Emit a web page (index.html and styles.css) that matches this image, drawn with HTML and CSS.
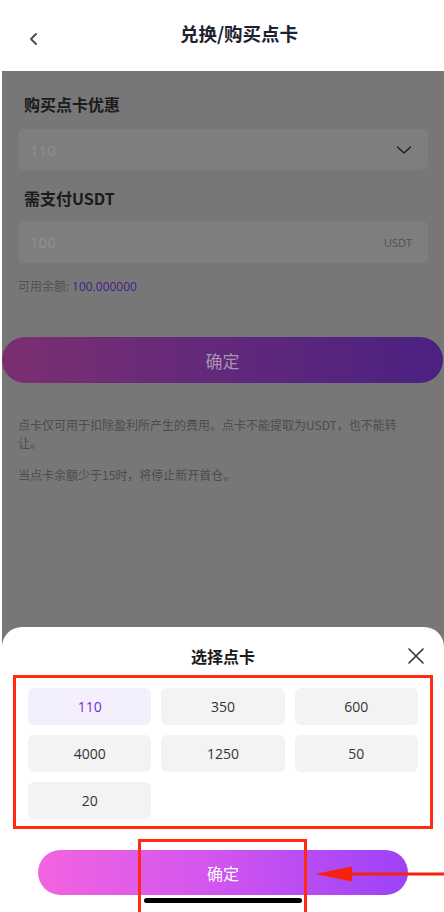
FILE: index.html
```html
<!DOCTYPE html>
<html lang="zh-CN">
<head>
    <meta charset="UTF-8">
    <meta name="viewport" content="width=device-width, initial-scale=1.0">
    <title>兑换/购买点卡</title>
    <link rel="stylesheet" href="styles.css">
</head>
<body>
    <header class="topbar">
        <svg class="back" width="12" height="14" viewBox="0 0 12 14">
            <path d="M8 2 L3 7 L8 12" fill="none" stroke="#4b515c" stroke-width="2" stroke-linecap="round" stroke-linejoin="round"/>
        </svg>
        <h1>兑换/购买点卡</h1>
    </header>

    <main class="mask">
        <div class="label">购买点卡优惠</div>
        <div class="field">
            <span class="field-value">110</span>
            <svg width="16" height="10" viewBox="0 0 16 10">
                <path d="M1.5 2 L8 8 L14.5 2" fill="none" stroke="#222" stroke-width="1.6" stroke-linecap="round" stroke-linejoin="round"/>
            </svg>
        </div>
        <div class="label label-second">需支付USDT</div>
        <div class="field">
            <span class="field-value">100</span>
            <span class="field-unit">USDT</span>
        </div>
        <div class="balance">可用余额: <span class="balance-num">100.000000</span></div>
        <div class="confirm-dim">确定</div>
        <p class="note">点卡仅可用于扣除盈利所产生的费用。点卡不能提取为USDT，也不能转让。</p>
        <p class="note">当点卡余额少于15时，将停止新开首仓。</p>
    </main>

    <section class="sheet">
        <div class="sheet-head">
            <h2>选择点卡</h2>
            <svg class="close" width="18" height="18" viewBox="0 0 18 18">
                <path d="M2 2 L16 16 M16 2 L2 16" stroke="#333" stroke-width="1.6" stroke-linecap="round"/>
            </svg>
        </div>
        <div class="pick-box">
            <div class="pick-grid">
                <div class="pick active">110</div>
                <div class="pick">350</div>
                <div class="pick">600</div>
                <div class="pick">4000</div>
                <div class="pick">1250</div>
                <div class="pick">50</div>
                <div class="pick">20</div>
            </div>
        </div>
        <div class="confirm">确定</div>
    </section>

    <div class="mark-btn"></div>
    <div class="home-bar"></div>
    <svg class="arrow" width="132" height="20" viewBox="0 0 132 20">
        <path d="M37 8.5 H132 V11.5 H37 Z" fill="#f4220f"/>
        <path d="M2 10 L39 2.5 L39 17.5 Z" fill="#f4220f"/>
    </svg>
</body>
</html>
```

FILE: styles.css
```css
body {
    margin: 0;
    padding: 0;
    height: 912px;
    overflow: hidden;
    position: relative;
    background-color: #fff;
    font-family: "Noto Sans CJK SC", "Noto Sans", sans-serif;
}
.topbar {
    height: 71px;
    display: flex;
    align-items: center;
    justify-content: center;
    position: relative;
    padding: 0 0 6px 34px;
    box-sizing: border-box;
}
.topbar h1 {
    margin: 0;
    font-size: 18.5px;
    font-weight: 700;
    color: #1d2130;
}
.back {
    position: absolute;
    left: 28px;
    top: 32px;
}
.mask {
    margin-left: 2px;
    height: 841px;
    background-color: #777;
    padding: 22px 16px 0;
    box-sizing: border-box;
}
.label {
    font-size: 16px;
    line-height: 22px;
    font-weight: 700;
    color: #1b1b1b;
    padding-left: 6px;
}
.label-second {
    margin-top: 17px;
}
.field {
    margin-top: 14px;
    height: 41px;
    border-radius: 6px;
    background-color: #7e7e7e;
    display: flex;
    align-items: center;
    justify-content: space-between;
    padding: 0 16px 0 12px;
}
.label-second + .field {
    margin-top: 12px;
    height: 42px;
}
.field-value {
    font-family: "Open Sans", sans-serif;
    font-size: 15px;
    color: #909090;
}
.field-unit {
    font-family: "Open Sans", sans-serif;
    font-size: 11px;
    color: #505050;
}
.balance {
    margin-top: 14px;
    font-size: 12px;
    line-height: 18px;
    color: #525252;
}
.balance-num {
    font-family: "Open Sans", sans-serif;
    color: #471c87;
}
.confirm-dim {
    margin: 41px -15px 0 -16px;
    height: 46px;
    border-radius: 23px;
    background: linear-gradient(90deg, #7b2f70, #64297a 45%, #4b2182);
    color: #a893b4;
    font-size: 17px;
    display: flex;
    align-items: center;
    justify-content: center;
}
.note {
    margin: 14px 0 0;
    font-size: 12px;
    line-height: 18px;
    color: #4c4c4c;
    padding-right: 14px;
}
.confirm-dim + .note {
    margin-top: 33px;
}
.sheet {
    position: absolute;
    left: 2px;
    right: 0;
    bottom: 0;
    height: 285px;
    background-color: #fff;
    border-radius: 20px 20px 0 0;
}
.sheet-head {
    padding-top: 18px;
    position: relative;
    text-align: center;
}
.sheet-head h2 {
    margin: 0;
    font-size: 16px;
    line-height: 22px;
    font-weight: 700;
    color: #1a1a1a;
}
.close {
    position: absolute;
    right: 19px;
    top: 20px;
}
.pick-box {
    margin: 8px 11px 0;
    border: 3px solid #ff2a10;
    padding: 10px 12px 7px;
}
.pick-grid {
    display: grid;
    grid-template-columns: repeat(3, 1fr);
    gap: 10px;
}
.pick {
    height: 37px;
    border-radius: 6px;
    background-color: #f3f3f3;
    display: flex;
    align-items: center;
    justify-content: center;
    font-family: "Open Sans", sans-serif;
    font-size: 14px;
    color: #333;
}
.pick.active {
    background-color: #f4effc;
    color: #7b2ad6;
}
.confirm {
    margin: 21px 36px 0;
    height: 45px;
    border-radius: 23px;
    background: linear-gradient(90deg, #f264e0, #d456ee 45%, #9c42f8);
    color: #fff;
    font-size: 16px;
    display: flex;
    align-items: center;
    justify-content: center;
}
.mark-btn {
    position: absolute;
    left: 138px;
    top: 839px;
    width: 163px;
    height: 80px;
    border: 3px solid #ff2a10;
}
.home-bar {
    position: absolute;
    left: 144px;
    top: 898px;
    width: 158px;
    height: 5px;
    border-radius: 3px;
    background-color: #000;
    box-shadow: 0 0 0 1px #fff;
}
.arrow {
    position: absolute;
    left: 313px;
    top: 864px;
}
```
